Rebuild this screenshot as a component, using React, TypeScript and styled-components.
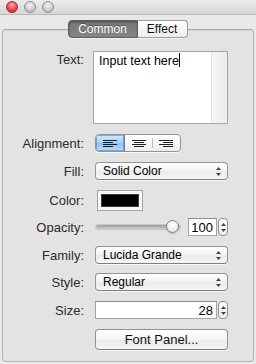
import styled, { createGlobalStyle } from "styled-components";

const Global = createGlobalStyle`
    html, body {
        margin: 0;
        padding: 0;
        background: #e8e8e8;
    }
    body {
        font-family: "Liberation Sans", Arial, sans-serif;
        -webkit-font-smoothing: antialiased;
    }
`;

type Align = "left" | "center" | "right";

function AlignIcon({ align }: { align: Align }) {
    const rows = [14, 10, 14, 10];
    return (
        <svg width="14" height="7" viewBox="0 0 14 7">
            {rows.map((w, i) => {
                const x = align === "left" ? 0 : align === "right" ? 14 - w : (14 - w) / 2;
                return <rect key={i} x={x} y={i * 2} width={w} height="1" fill="#1e1e1e" />;
            })}
        </svg>
    );
}

function UpDown() {
    return (
        <svg width="5" height="9" viewBox="0 0 5 9">
            <path d="M2.5 0 L5 3 L0 3 Z" fill="#444" />
            <path d="M2.5 9 L5 6 L0 6 Z" fill="#444" />
        </svg>
    );
}

export default function App() {
    return (
        <Window>
            <Global />
            <TitleBar>
                <Light $red />
                <Light />
                <Light />
            </TitleBar>
            <Body>
                <TabBar>
                    <Tab $active>Common</Tab>
                    <Tab>Effect</Tab>
                </TabBar>
                <GroupBox>
                    <Form>
                        <Label $top>Text:</Label>
                        <TextArea>
                            <TextValue>Input text here<Caret /></TextValue>
                            <Gutter />
                        </TextArea>

                        <Label $mt={10}>Alignment:</Label>
                        <Segmented $mt={10}>
                            <Segment $selected><AlignIcon align="left" /></Segment>
                            <Segment><AlignIcon align="center" /></Segment>
                            <Segment $divider><AlignIcon align="right" /></Segment>
                        </Segmented>

                        <Label $mt={10}>Fill:</Label>
                        <Popup $mt={10}>Solid Color<UpDown /></Popup>

                        <Label $mt={10} $h={21}>Color:</Label>
                        <ColorWell $mt={10}><Swatch /></ColorWell>

                        <Label $mt={7}>Opacity:</Label>
                        <SliderRow $mt={7}>
                            <Slider>
                                <Track />
                                <Knob />
                            </Slider>
                            <NumberField $w={29}>100</NumberField>
                            <Stepper><UpDown /></Stepper>
                        </SliderRow>

                        <Label $mt={10}>Family:</Label>
                        <Popup $mt={10}>Lucida Grande<UpDown /></Popup>

                        <Label $mt={9}>Style:</Label>
                        <Popup $mt={9}>Regular<UpDown /></Popup>

                        <Label $mt={10}>Size:</Label>
                        <SizeRow $mt={10}>
                            <NumberField $grow>28</NumberField>
                            <Stepper><UpDown /></Stepper>
                        </SizeRow>

                        <span />
                        <PushButton $mt={10}>Font Panel...</PushButton>
                    </Form>
                </GroupBox>
            </Body>
        </Window>
    );
}

const Window = styled.div`
    width: 256px;
    height: 364px;
    background: #e8e8e8;
    display: flex;
    flex-direction: column;
    overflow: hidden;
`;

const TitleBar = styled.div`
    height: 15px;
    flex-shrink: 0;
    display: flex;
    align-items: flex-start;
    gap: 6px;
    padding: 1px 0 0 6px;
    box-sizing: border-box;
    background: linear-gradient(#ececec, #d6d6d6);
    border-bottom: 1px solid #b9b9b9;
`;

const Light = styled.div<{ $red?: boolean }>`
    width: 12px;
    height: 12px;
    border-radius: 50%;
    box-sizing: border-box;
    background: ${({ $red }) =>
        $red
            ? "radial-gradient(circle at 50% 30%, #ffb3b3 0, #f0585b 45%, #c4141d 100%)"
            : "radial-gradient(circle at 50% 30%, #f4f4f4 0, #d2d2d2 50%, #a9a9a9 100%)"};
    border: 1px solid ${({ $red }) => ($red ? "#9c2a2a" : "#8f8f8f")};
`;

const Body = styled.div`
    flex: 1;
    display: flex;
    flex-direction: column;
    padding: 5px 2px 2px 2px;
`;

const TabBar = styled.div`
    position: relative;
    z-index: 1;
    align-self: center;
    margin-left: -1px;
    display: flex;
    height: 18px;
    border-radius: 4px;
    box-shadow: 0 1px 0 rgba(255, 255, 255, 0.6);
`;

const Tab = styled.div<{ $active?: boolean }>`
    box-sizing: border-box;
    height: 18px;
    width: ${({ $active }) => ($active ? "70px" : "50px")};
    display: flex;
    align-items: center;
    justify-content: center;
    font-size: 12px;
    color: ${({ $active }) => ($active ? "#ffffff" : "#111")};
    text-shadow: ${({ $active }) => ($active ? "0 -1px 0 rgba(0,0,0,0.35)" : "none")};
    background: ${({ $active }) =>
        $active ? "linear-gradient(#747474, #878787)" : "linear-gradient(#ffffff, #ececec)"};
    border: 1px solid ${({ $active }) => ($active ? "#5d5d5d" : "#9a9a9a")};
    border-radius: ${({ $active }) => ($active ? "4px 0 0 4px" : "0 4px 4px 0")};
    ${({ $active }) => ($active ? "" : "border-left: none;")}
    box-shadow: ${({ $active }) => ($active ? "inset 0 1px 2px rgba(0,0,0,0.35)" : "none")};
`;

const GroupBox = styled.div`
    flex: 1;
    margin-top: -9px;
    border: 1px solid #b4b4b4;
    border-top-color: #a8a8a8;
    border-radius: 4px;
    background: #e3e3e3;
    box-shadow: inset 0 1px 1px rgba(0, 0, 0, 0.06);
    padding: 21px 27px 0 0;
`;

const Form = styled.div`
    display: grid;
    grid-template-columns: 81px 1fr;
    column-gap: 9px;
    align-items: start;
`;

const Label = styled.div<{ $top?: boolean; $mt?: number; $h?: number }>`
    margin-top: ${({ $mt }) => $mt ?? 0}px;
    height: ${({ $h, $top }) => ($top ? "auto" : `${$h ?? 18}px`)};
    padding-top: ${({ $top }) => ($top ? "1px" : "0")};
    display: flex;
    align-items: center;
    justify-content: flex-end;
    font-size: 13px;
    color: #2b2b2b;
    white-space: nowrap;
`;

const TextArea = styled.div`
    height: 73px;
    box-sizing: border-box;
    background: #fff;
    border: 1px solid #a6a6a6;
    display: flex;
`;

const TextValue = styled.div`
    flex: 1;
    padding: 1px 0 0 5px;
    font-size: 12.5px;
    color: #000;
    line-height: 16px;
`;

const Caret = styled.span`
    display: inline-block;
    width: 1px;
    height: 14px;
    background: #000;
    vertical-align: -2px;
`;

const Gutter = styled.div`
    width: 15px;
    border-left: 1px solid #e0e0e0;
    background: linear-gradient(90deg, #f6f6f6, #ececec);
`;

const Segmented = styled.div<{ $mt?: number }>`
    margin-top: ${({ $mt }) => $mt ?? 0}px;
    margin-left: 2px;
    width: 86px;
    height: 18px;
    box-sizing: border-box;
    display: flex;
    border: 1px solid #939393;
    border-radius: 4px;
    overflow: hidden;
    background: linear-gradient(#ffffff, #ededed);
    box-shadow: 0 1px 0 rgba(255, 255, 255, 0.7);
`;

const Segment = styled.div<{ $selected?: boolean; $divider?: boolean }>`
    flex: 1;
    display: flex;
    align-items: center;
    justify-content: center;
    background: ${({ $selected }) =>
        $selected ? "linear-gradient(#d4e8fd, #a5cff8 50%, #8cc2f6 51%, #b8dcfc)" : "transparent"};
    border-right: ${({ $selected }) => ($selected ? "1px solid #5a7fb0" : "none")};
    box-shadow: ${({ $selected }) => ($selected ? "inset 0 0 0 1px rgba(70,110,170,0.5)" : "none")};
    position: relative;
    &::before {
        content: "";
        display: ${({ $divider }) => ($divider ? "block" : "none")};
        position: absolute;
        left: 0;
        top: 3px;
        bottom: 3px;
        width: 1px;
        background: #bdbdbd;
    }
`;

const Popup = styled.div<{ $mt?: number }>`
    margin-top: ${({ $mt }) => $mt ?? 0}px;
    margin-left: 2px;
    height: 18px;
    box-sizing: border-box;
    display: flex;
    align-items: center;
    justify-content: space-between;
    padding: 0 6px 0 7px;
    font-size: 12px;
    color: #000;
    background: linear-gradient(#ffffff, #f3f3f3 50%, #eaeaea 51%, #f6f6f6);
    border: 1px solid #949494;
    border-bottom-color: #7e7e7e;
    border-radius: 4px;
    box-shadow: 0 1px 0 rgba(255, 255, 255, 0.7);
`;

const ColorWell = styled.div<{ $mt?: number }>`
    margin-top: ${({ $mt }) => $mt ?? 0}px;
    margin-left: 4px;
    width: 46px;
    height: 21px;
    box-sizing: border-box;
    padding: 3px;
    background: #f7f7f7;
    border: 1px solid #a4a4a4;
`;

const Swatch = styled.div`
    height: 100%;
    background: #000;
    border: 1px solid #3a3a3a;
    box-sizing: border-box;
`;

const SliderRow = styled.div<{ $mt?: number }>`
    margin-top: ${({ $mt }) => $mt ?? 0}px;
    height: 18px;
    display: flex;
    align-items: center;
`;

const Slider = styled.div`
    position: relative;
    margin-left: 3px;
    width: 84px;
    height: 18px;
    margin-right: 8px;
    display: flex;
    align-items: center;
`;

const Track = styled.div`
    width: 100%;
    height: 4px;
    border-radius: 2px;
    background: linear-gradient(#9a9a9a, #cfcfcf);
    box-shadow: 0 0 0 1px rgba(0, 0, 0, 0.12);
`;

const Knob = styled.div`
    position: absolute;
    right: 1px;
    top: 2px;
    width: 13px;
    height: 13px;
    box-sizing: border-box;
    border-radius: 50%;
    border: 1px solid #848484;
    background: radial-gradient(circle at 50% 35%, #ffffff 0, #f2f2f2 50%, #d4d4d4 100%);
    box-shadow: 0 1px 1px rgba(0, 0, 0, 0.2);
`;

const NumberField = styled.div<{ $w?: number; $grow?: boolean }>`
    ${({ $grow, $w }) => ($grow ? "flex: 1;" : `width: ${$w}px;`)}
    height: 18px;
    box-sizing: border-box;
    background: #fff;
    border: 1px solid #a4a4a4;
    border-top-color: #8e8e8e;
    display: flex;
    align-items: center;
    justify-content: flex-end;
    padding-right: 3px;
    font-size: 13px;
    color: #000;
`;

const Stepper = styled.div`
    margin-left: 1px;
    width: 10px;
    height: 18px;
    box-sizing: border-box;
    border: 1px solid #8f8f8f;
    border-radius: 4px;
    background: linear-gradient(#ffffff, #ececec);
    display: flex;
    align-items: center;
    justify-content: center;
`;

const SizeRow = styled.div<{ $mt?: number }>`
    margin-top: ${({ $mt }) => $mt ?? 0}px;
    margin-left: 2px;
    height: 18px;
    display: flex;
`;

const PushButton = styled.div<{ $mt?: number }>`
    margin-top: ${({ $mt }) => $mt ?? 0}px;
    margin-left: 2px;
    height: 21px;
    box-sizing: border-box;
    display: flex;
    align-items: center;
    justify-content: center;
    font-size: 13px;
    color: #111;
    background: linear-gradient(#ffffff, #f4f4f4 50%, #e9e9e9 51%, #f5f5f5);
    border: 1px solid #929292;
    border-bottom-color: #7b7b7b;
    border-radius: 4px;
    box-shadow: 0 1px 0 rgba(255, 255, 255, 0.7);
`;
